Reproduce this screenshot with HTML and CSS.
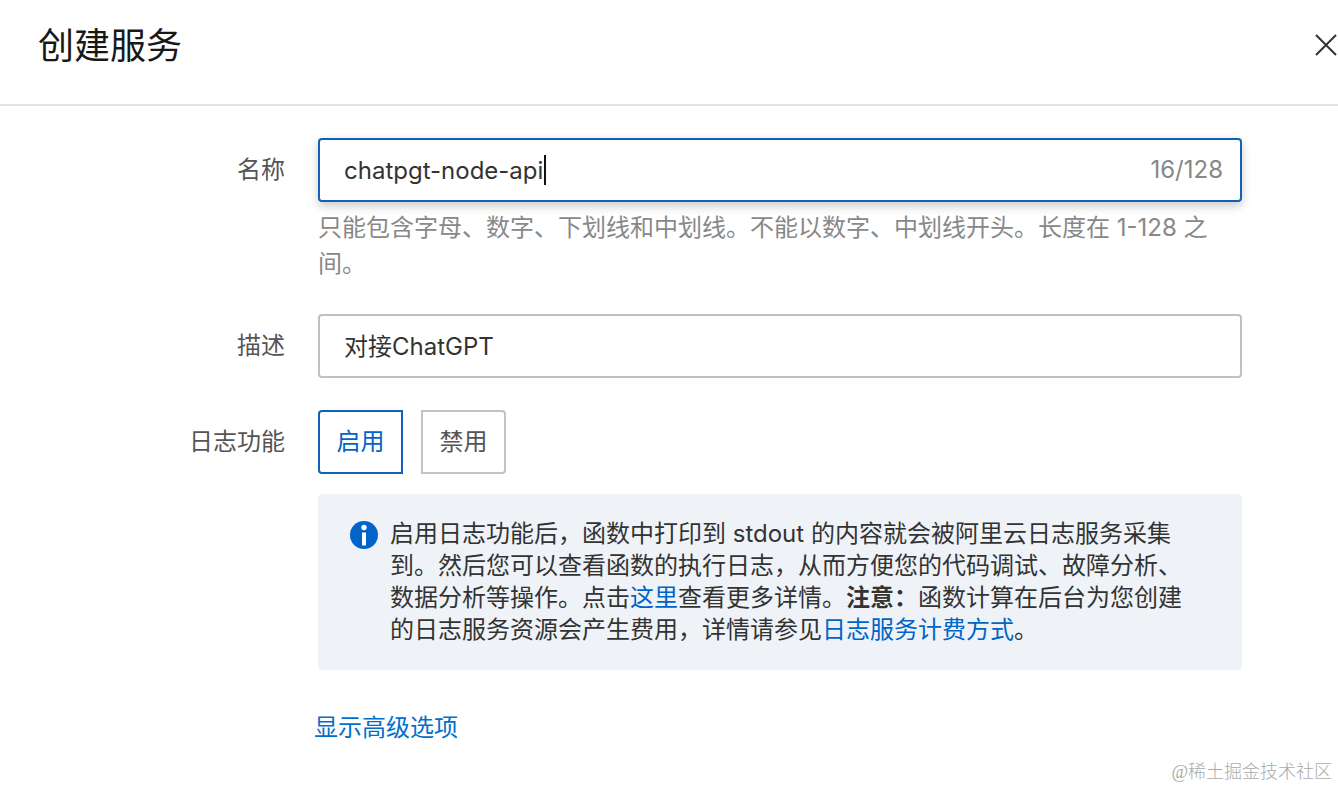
FILE: index.html
```html
<!DOCTYPE html>
<html lang="zh-CN">
<head>
<meta charset="utf-8">
<title>创建服务</title>
<link rel="stylesheet" href="styles.css">
</head>
<body>
<main class="panel">
  <header class="panel-header">
    <h1 class="panel-title">创建服务</h1>
    <button class="close" type="button" aria-label="关闭">
      <svg width="24" height="24" viewBox="0 0 24 24" fill="none" stroke="#333" stroke-width="2"><path d="M2 2L22 22M22 2L2 22"/></svg>
    </button>
  </header>
  <form class="form">
    <div class="row">
      <label class="label" for="name">名称</label>
      <div class="field">
        <div class="input-wrap">
          <input class="input input-active" id="name" type="text" value="chatpgt-node-api" maxlength="128">
          <span class="caret"></span>
          <span class="count">16/128</span>
        </div>
        <p class="help">只能包含字母、数字、下划线和中划线。不能以数字、中划线开头。长度在 1-128 之间。</p>
      </div>
    </div>
    <div class="row">
      <label class="label" for="desc">描述</label>
      <div class="field">
        <input class="input input-cjk" id="desc" type="text" value="对接ChatGPT">
      </div>
    </div>
    <div class="row">
      <span class="label" id="log-label">日志功能</span>
      <div class="field">
        <div class="options" role="radiogroup" aria-labelledby="log-label">
          <label class="option"><input class="option-input" type="radio" name="log" checked><span>启用</span></label>
          <label class="option"><input class="option-input" type="radio" name="log"><span>禁用</span></label>
        </div>
        <div class="notice">
          <svg class="notice-icon" width="28" height="28" viewBox="0 0 28 28"><circle cx="14" cy="14" r="14" fill="#0064c8"/><circle cx="14" cy="6.5" r="2.7" fill="#fff"/><path d="M12 11.5h4v13h-4z" fill="#fff"/></svg>
          <p class="notice-text">启用日志功能后，函数中打印到 stdout 的内容就会被阿里云日志服务采集到。然后您可以查看函数的执行日志，从而方便您的代码调试、故障分析、数据分析等操作。点击<a class="link" href="#detail">这里</a>查看更多详情。<strong>注意：</strong>函数计算在后台为您创建的日志服务资源会产生费用，详情请参见<a class="link" href="#billing">日志服务计费方式</a>。</p>
        </div>
      </div>
    </div>
    <div class="more"><a class="more-link" href="#advanced">显示高级选项</a></div>
  </form>
  <div class="watermark">@稀土掘金技术社区</div>
</main>
</body>
</html>
```
FILE: styles.css
```css
* {
  box-sizing: border-box;
}

body {
  margin: 0;
  background: #fff;
  color: #333;
  font-family: Inter, "Noto Sans CJK SC", sans-serif;
  font-size: 24px;
  line-height: 36px;
}

h1,
p {
  margin: 0;
}

a {
  text-decoration: none;
}

.panel {
  position: relative;
  min-height: 100vh;
}

.panel-header {
  display: flex;
  align-items: flex-start;
  justify-content: space-between;
  padding: 20px 0 32px 38px;
  border-bottom: 2px solid #e3e4e6;
}

.panel-title {
  color: #181818;
  font-size: 36px;
  font-weight: 400;
  line-height: 52px;
}

.close {
  display: flex;
  padding: 13px 0;
  border: 0;
  background: none;
}

.form {
  display: flex;
  flex-direction: column;
  gap: 32px;
  padding: 32px 96px 40px 0;
}

.row {
  display: grid;
  grid-template-columns: 285px 1fr;
  column-gap: 33px;
}

.label {
  color: #555;
  line-height: 64px;
  text-align: right;
}

.input-wrap {
  position: relative;
}

.input {
  display: block;
  width: 100%;
  height: 64px;
  padding: 0 24px;
  border: 2px solid #c0c0c0;
  border-radius: 4px;
  outline: 0;
  background: #fff;
  color: #333;
  font: inherit;
}

.input-cjk {
  padding-bottom: 3px;
}

.input-active {
  border-color: #0f62b8;
  box-shadow: 0 4px 10px rgba(50, 30, 50, 0.24);
}

.caret {
  position: absolute;
  top: 17px;
  left: 226px;
  width: 2px;
  height: 30px;
  background: #111;
}

.count {
  position: absolute;
  top: 14px;
  right: 19px;
  color: #888;
}

.help {
  padding-top: 8px;
  color: #888;
}

.options {
  display: flex;
  gap: 18px;
}

.option {
  position: relative;
  min-width: 85px;
  padding: 12px 16px;
  border: 2px solid #c0c4c6;
  border-radius: 0 4px 4px 0;
  color: #555;
  text-align: center;
}

.option:first-child {
  border-radius: 4px 0 0 4px;
}

.option:has(:checked) {
  border-color: #0f62b8;
  color: #0064c8;
}

.option-input {
  position: absolute;
  inset: 0;
  margin: 0;
  opacity: 0;
}

.notice {
  display: flex;
  gap: 12px;
  margin-top: 20px;
  padding: 24px 32px;
  border-radius: 4px;
  background: #eff3f8;
  line-height: 32px;
}

.notice-icon {
  flex: none;
  margin-top: 3px;
}

.notice-text {
  max-width: 812px;
}

.link {
  color: #0064c8;
}

.more {
  padding: 8px 0 0 314px;
}

.more-link {
  color: #0070cc;
}

.watermark {
  position: absolute;
  right: 6px;
  bottom: 4px;
  color: #aaa;
  font-family: "Liberation Serif", "Noto Sans CJK SC", serif;
  font-size: 18px;
  font-weight: 300;
  line-height: 24px;
}
```
